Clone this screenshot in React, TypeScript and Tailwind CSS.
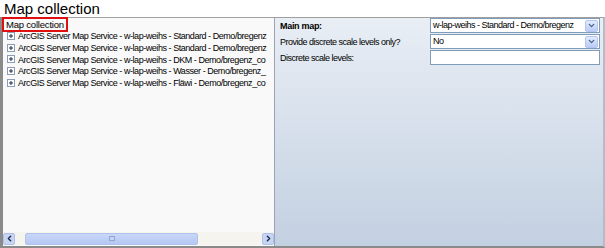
import { ChevronDown, ChevronLeft, ChevronRight } from 'lucide-react';

const services = [
  "ArcGIS Server Map Service - w-lap-weihs - Standard - Demo/bregenz",
  "ArcGIS Server Map Service - w-lap-weihs - Standard - Demo/bregenz",
  "ArcGIS Server Map Service - w-lap-weihs - DKM - Demo/bregenz_co",
  "ArcGIS Server Map Service - w-lap-weihs - Wasser - Demo/bregenz_",
  "ArcGIS Server Map Service - w-lap-weihs - Fläwi - Demo/bregenz_co",
];

const PlusBox = () => (
  <div className="w-[8px] h-[8px] border border-[#8c9cb4] bg-white flex items-center justify-center shrink-0">
    <svg width="4" height="4" viewBox="0 0 4 4">
      <path d="M0 2h4M2 0v4" stroke="#1c2c4c" strokeWidth="1" />
    </svg>
  </div>
);

const DropButton = () => (
  <div className="w-[13px] h-[12px] shrink-0 rounded-[2px] bg-gradient-to-b from-[#e2ebfd] to-[#b9cdf7] border border-[#b4c6ee] flex items-center justify-center">
    <ChevronDown className="w-[9px] h-[9px] text-[#4d6185]" strokeWidth={3.5} />
  </div>
);

const App = () => {
  return (
    <div className="w-[605px] h-[248px] bg-[#f4f4f4] flex flex-col overflow-hidden" style={{ fontFamily: '"Liberation Sans", Arial, sans-serif' }}>
      <div className="h-[17px] pl-[4px] text-[15px] leading-[17px] text-black bg-white">
        Map collection
      </div>
      <div className="flex-1 flex min-h-0 border-t border-[#a0a0a0] border-l-[3px] border-l-[#8a8a8a] border-b-[2px] border-b-[#8a8a8a] border-r-[2px] border-r-[#b4bcc8]">
        {/* tree panel */}
        <div className="w-[272px] bg-[#f9f9f9] flex flex-col border-r border-[#9aa4b4]">
          <div className="flex-1 text-[9px] tracking-[-0.45px] leading-[12px] text-black">
            <div className="inline-block border-2 border-[#e01010] px-[2px] h-[15px] leading-[11px] mt-[-1px] ml-[-1px] text-[9.5px] tracking-[-0.2px]">Map collection</div>
            <div className="flex flex-col mt-[-2px] pr-[6px]">
              {services.map((s, i) => (
                <div key={i} className="flex items-center h-[11.8px] pl-[4px] gap-[3px] whitespace-nowrap overflow-hidden">
                  <PlusBox />
                  <span>{s}</span>
                </div>
              ))}
            </div>
          </div>
          <div className="h-[13px] flex items-center bg-[#f6f4ee] mb-[1px]">
            <div className="w-[12px] h-[12px] rounded-[2px] bg-[#c7d5f3] border border-[#aebfe8] flex items-center justify-center">
              <ChevronLeft className="w-[9px] h-[9px] text-[#1f2f50]" strokeWidth={4} />
            </div>
            <div className="w-[10px]" />
            <div className="w-[173px] h-[12px] rounded-[2px] bg-gradient-to-b from-[#c8d6f8] to-[#b5c8f3] border border-[#b0c2ec] flex items-center justify-center">
              <div className="w-[6px] h-[5px] border border-[#90a6d8] bg-[#c6d4f6]" />
            </div>
            <div className="flex-1" />
            <div className="w-[12px] h-[12px] rounded-[2px] bg-[#c7d5f3] border border-[#aebfe8] flex items-center justify-center">
              <ChevronRight className="w-[9px] h-[9px] text-[#1f2f50]" strokeWidth={4} />
            </div>
          </div>
        </div>
        {/* property panel */}
        <div className="flex-1 min-w-0 bg-gradient-to-b from-[#e9eef5] to-[#c3d0e1] pl-[5px] pr-[3px] text-[9px] tracking-[-0.5px] text-black">
          <div className="grid grid-cols-[150px_minmax(0,1fr)] gap-y-[1px]">
            <div className="h-[15px] leading-[16px] font-bold tracking-[-0.3px]">Main map:</div>
            <div className="h-[15px] border border-[#7f9db9] bg-white flex items-center justify-between pl-[2px] pr-[1px] overflow-hidden">
              <span className="whitespace-nowrap">w-lap-weihs - Standard - Demo/bregenz</span>
              <DropButton />
            </div>
            <div className="h-[15px] leading-[16px] whitespace-nowrap">Provide discrete scale levels only?</div>
            <div className="h-[15px] border border-[#7f9db9] bg-white flex items-center justify-between pl-[2px] pr-[1px]">
              <span>No</span>
              <DropButton />
            </div>
            <div className="h-[15px] leading-[16px] whitespace-nowrap">Discrete scale levels:</div>
            <div className="h-[15px] border border-[#7f9db9] bg-white" />
          </div>
        </div>
      </div>
    </div>
  );
};

export default App;
